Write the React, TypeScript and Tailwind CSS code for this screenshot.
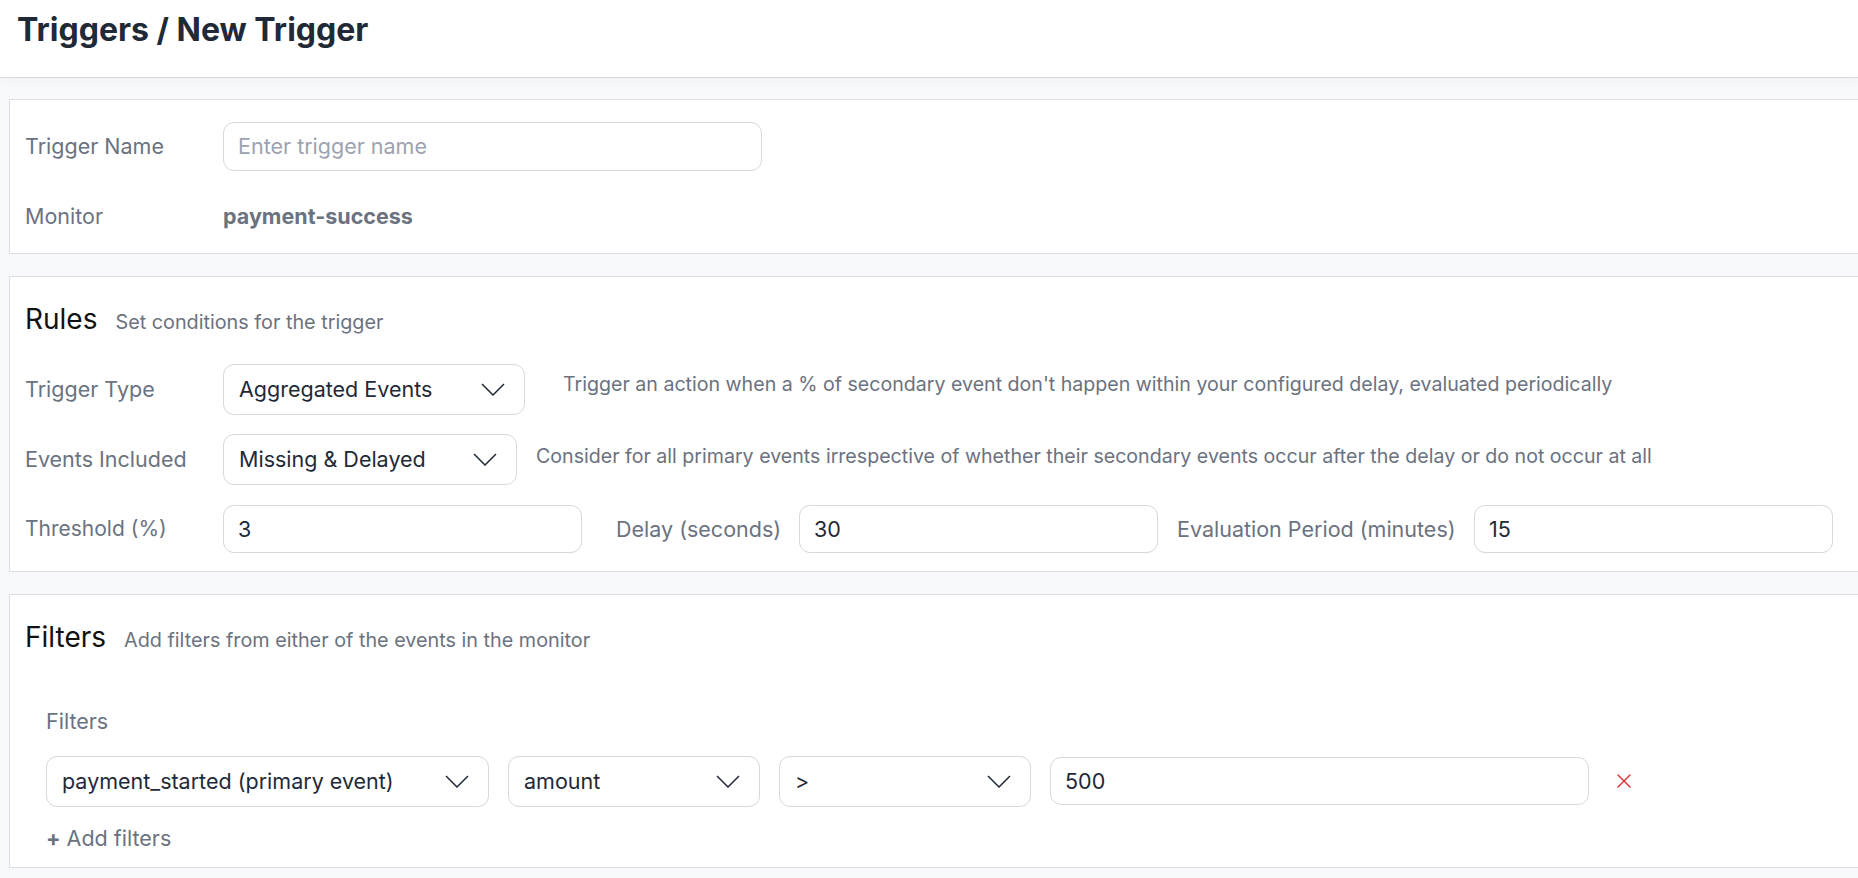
import { X } from 'lucide-react';

function Chevron() {
  return (
    <svg width="24" height="13" viewBox="0 0 24 13" fill="none" className="shrink-0">
      <polyline points="1,1 12,12 23,1" stroke="#1f2937" strokeWidth="1.5" strokeLinejoin="miter" />
    </svg>
  );
}

function Select({ value, width }: { value: string; width: string }) {
  return (
    <div
      className={`${width} h-[51px] shrink-0 flex items-center justify-between pl-[15px] pr-[19px] rounded-[11px] border border-[#d6d8de] bg-white text-[21.5px] text-[#1f2937]`}
    >
      <span>{value}</span>
      <Chevron />
    </div>
  );
}

function TextInput({ value, placeholder, width }: { value?: string; placeholder?: string; width: string }) {
  return (
    <div
      className={`${width} h-[48px] shrink-0 flex items-center px-[14px] rounded-[11px] border border-[#d6d8de] bg-white text-[21.5px]`}
    >
      {value ? (
        <span className="text-[#1f2937]">{value}</span>
      ) : (
        <span className="text-[#9ca3af]">{placeholder}</span>
      )}
    </div>
  );
}

export default function App() {
  return (
    <div className="min-h-screen w-full overflow-hidden bg-[#f8f9fb] font-['Inter',sans-serif]">
      {/* Page header */}
      <header className="h-[78px] bg-white border-b border-[#d4d6dd] px-[17px] pt-[10px] shadow-[0_6px_10px_rgba(0,0,0,0.025)]">
        <h1 className="text-[32px] leading-[40px] font-bold text-[#1f2937]">Triggers / New Trigger</h1>
      </header>

      <main className="pl-[9px] pt-[21px] flex flex-col gap-[22px]">
        {/* Trigger info */}
        <section className="h-[155px] bg-white border border-r-0 border-[#dcdde5] pl-[15px] pt-[22px]">
          <div className="flex items-center h-[49px]">
            <div className="w-[198px] text-[21.5px] text-[#6b7280]">Trigger Name</div>
            <div className="w-[539px] h-[49px] flex items-center px-[14px] rounded-[11px] border border-[#d6d8de] text-[21.5px] text-[#9ca3af]">
              Enter trigger name
            </div>
          </div>
          <div className="flex items-center mt-[33px] h-[24px]">
            <div className="w-[198px] text-[21.5px] text-[#6b7280]">Monitor</div>
            <div className="text-[21.5px] font-bold text-[#6b7280]">payment-success</div>
          </div>
        </section>

        {/* Rules */}
        <section className="h-[296px] bg-white border border-r-0 border-[#dcdde5] pl-[15px] pt-[24px]">
          <div className="flex items-baseline gap-[18px]">
            <h2 className="text-[28px] leading-[36px] text-[#111]">Rules</h2>
            <span className="text-[19.8px] text-[#6b7280]">Set conditions for the trigger</span>
          </div>

          <div className="flex items-center mt-[26px]">
            <div className="w-[198px] text-[21.5px] text-[#6b7280]">Trigger Type</div>
            <Select value="Aggregated Events" width="w-[302px]" />
            <p className="ml-[38px] -mt-[8px] text-[19.6px] text-[#6b7280]">
              Trigger an action when a % of secondary event don't happen within your configured delay, evaluated periodically
            </p>
          </div>

          <div className="flex items-center mt-[19px]">
            <div className="w-[198px] text-[21.5px] text-[#6b7280]">Events Included</div>
            <Select value="Missing & Delayed" width="w-[294px]" />
            <p className="ml-[19px] -mt-[4px] text-[19.6px] text-[#6b7280]">
              Consider for all primary events irrespective of whether their secondary events occur after the delay or do not occur at all
            </p>
          </div>

          <div className="flex items-center mt-[20px]">
            <div className="w-[198px] text-[21px] text-[#6b7280]">Threshold (%)</div>
            <TextInput value="3" width="w-[359px]" />
            <div className="ml-[34px] w-[183px] text-[21.5px] text-[#6b7280]">Delay (seconds)</div>
            <TextInput value="30" width="w-[359px]" />
            <div className="ml-[19px] w-[297px] text-[21.5px] text-[#6b7280]">Evaluation Period (minutes)</div>
            <TextInput value="15" width="w-[359px]" />
          </div>
        </section>

        {/* Filters */}
        <section className="h-[274px] bg-white border border-r-0 border-[#dcdde5] pl-[15px] pt-[24px]">
          <div className="flex items-baseline gap-[18px]">
            <h2 className="text-[28px] leading-[36px] text-[#111]">Filters</h2>
            <span className="text-[19.8px] text-[#6b7280]">Add filters from either of the events in the monitor</span>
          </div>

          <div className="pl-[21px] mt-[52px]">
            <div className="text-[21.5px] leading-[26px] text-[#6b7280]">Filters</div>
            <div className="flex items-center gap-[19px] mt-[22px]">
              <Select value="payment_started (primary event)" width="w-[443px]" />
              <Select value="amount" width="w-[252px]" />
              <Select value=">" width="w-[252px]" />
              <TextInput value="500" width="w-[539px]" />
              <X size={24} strokeWidth={1.5} className="ml-[4px] text-[#e03a3a]" />
            </div>
            <button className="mt-[16px] flex items-center gap-[6px] text-[21.5px] leading-[30px] text-[#6b7280]">
              <span className="font-bold text-[#6b7280]">+</span>
              <span>Add filters</span>
            </button>
          </div>
        </section>
      </main>
    </div>
  );
}
